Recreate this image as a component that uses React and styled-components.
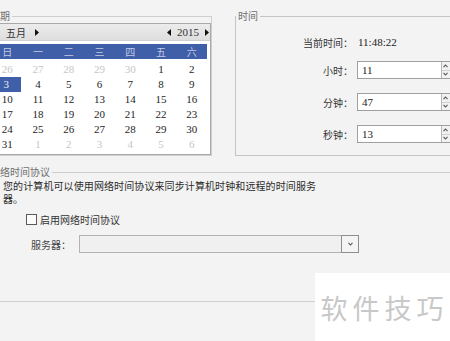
import React from 'react';
import styled, { createGlobalStyle } from 'styled-components';

const GlobalStyle = createGlobalStyle`
    html, body {
        margin: 0;
        padding: 0;
        background: #f3f3f3;
    }
    body {
        font-family: "Noto Sans CJK SC", sans-serif;
        font-size: 10px;
        color: #2a2a2a;
    }
`;

const cjk = `"Noto Sans CJK SC", sans-serif`;
const serif = `"Liberation Serif", "Noto Sans CJK SC", serif`;

const Page = styled.div`
    position: relative;
    width: 450px;
    height: 341px;
    overflow: hidden;
    background: #f3f3f3;
`;

const TopRow = styled.div`
    display: flex;
    align-items: flex-start;
    padding-top: 9px;
`;

const Group = styled.fieldset`
    flex: none;
    margin: 0;
    min-inline-size: 0;
    border: 1px solid ${p => p.$line || '#cfcfcf'};
    box-sizing: border-box;
`;

const Legend = styled.legend`
    padding: 0 2px;
    margin-left: ${p => p.$shift || 0}px;
    font-family: ${cjk};
    font-size: 10px;
    line-height: 14px;
    color: #707070;
`;

const DateGroup = styled(Group)`
    margin-left: -20px;
    width: 232px;
    padding: 0 0 0 10px;
`;

const Calendar = styled.div`
    width: 220px;
    box-sizing: border-box;
    border: 1px solid #a9a9a9;
    background: #fff;
    padding: 0 3px 2px 0;
`;

const CalHead = styled.div`
    display: flex;
    justify-content: space-between;
    align-items: center;
    height: 17px;
    margin-right: -3px;
    padding: 0 1px 0 14px;
    background: linear-gradient(#ececec, #dedede);
    border-bottom: 1px solid #d0d0d0;
    box-sizing: border-box;
`;

const Nav = styled.div`
    display: flex;
    align-items: center;
    gap: ${p => p.$gap || 6}px;
    font-family: ${p => (p.$num ? serif : cjk)};
    font-size: ${p => (p.$num ? 11 : 10)}px;
    color: #333;
`;

const Tri = ({ left }) => (
    <svg width="4" height="7" viewBox="0 0 4 7">
        <polygon points={left ? '4,0 0,3.5 4,7' : '0,0 4,3.5 0,7'} fill="#111" />
    </svg>
);

const WeekBand = styled.div`
    display: grid;
    grid-template-columns: repeat(7, 1fr);
    height: 15px;
    margin-top: 3px;
    background: #3f5fa9;
    margin-bottom: 3px;
`;

const WeekDay = styled.div`
    text-align: center;
    font-family: ${cjk};
    font-size: 10px;
    line-height: 15px;
    color: #c3cbe4;
`;

const DayGrid = styled.div`
    display: grid;
    grid-template-columns: repeat(7, 1fr);
    grid-auto-rows: 15px;
`;

const Day = styled.div`
    text-align: center;
    font-family: ${serif};
    font-size: 11px;
    line-height: 15px;
    margin-right: ${p => (p.$sel ? 2 : 0)}px;
    color: ${p => (p.$sel ? '#e8ecf6' : p.$dim ? '#c6c6c6' : '#1e1e1e')};
    background: ${p => (p.$sel ? '#3f5fa9' : 'transparent')};
`;

const TimeGroup = styled(Group)`
    margin-left: 23px;
    width: 260px;
    padding: 0;
    border-color: #c4c4c4;
`;

const TimeForm = styled.div`
    display: flex;
    flex-direction: column;
    gap: 14px;
    padding: 12px 0 12px;
`;

const FormRow = styled.div`
    display: flex;
    align-items: center;
    gap: 4px;
    height: ${p => (p.$plain ? 14 : 18)}px;
    margin-bottom: ${p => (p.$plain ? -2 : 0)}px;
`;

const Label = styled.div`
    width: 117px;
    text-align: right;
    font-family: ${cjk};
    font-size: 10px;
    color: #333;
`;

const Value = styled.div`
    padding-left: 1px;
    font-family: ${serif};
    font-size: 11px;
    color: #222;
`;

const Spin = styled.div`
    display: flex;
    width: 96px;
    height: 18px;
    box-sizing: border-box;
    border: 1px solid #9f9f9f;
    background: #fff;
`;

const SpinText = styled.div`
    flex: 1;
    padding-left: 4px;
    font-family: ${serif};
    font-size: 11px;
    line-height: 16px;
    color: #222;
`;

const SpinButtons = styled.div`
    display: flex;
    flex-direction: column;
    width: 10px;
    border-left: 1px solid #b8b8b8;
    background: #f2f2f2;
`;

const SpinBtn = styled.div`
    flex: 1;
    display: flex;
    align-items: center;
    justify-content: flex-start;
    padding-left: 1px;
    border-bottom: ${p => (p.$top ? '1px solid #d0d0d0' : 'none')};
`;

const Chevron = ({ up, w = 5 }) => (
    <svg width={w} height="4" viewBox="0 0 5 4">
        <polyline
            points={up ? '0.5,3.2 2.5,1 4.5,3.2' : '0.5,0.8 2.5,3 4.5,0.8'}
            fill="none"
            stroke="#555"
            strokeWidth="1.1"
        />
    </svg>
);

const SpinField = ({ value }) => (
    <Spin>
        <SpinText>{value}</SpinText>
        <SpinButtons>
            <SpinBtn $top><Chevron up /></SpinBtn>
            <SpinBtn><Chevron /></SpinBtn>
        </SpinButtons>
    </Spin>
);

const NtpGroup = styled(Group)`
    margin: 9px 0 0 -20px;
    width: 520px;
    padding: 0 0 48px 22px;
    border-color: #cfcfcf;
`;

const Desc = styled.p`
    margin: 0;
    max-width: 316px;
    font-family: ${cjk};
    font-size: 10px;
    letter-spacing: 0.1px;
    line-height: 13px;
    color: #2c2c2c;
`;

const CheckRow = styled.label`
    display: flex;
    align-items: center;
    gap: 3px;
    height: 14px;
    margin: 7px 0 0 23px;
    font-family: ${cjk};
    font-size: 10px;
    color: #333;
`;

const Box = styled.span`
    width: 11px;
    height: 11px;
    box-sizing: border-box;
    border: 1px solid #5a5a5a;
    background: #fbfbfb;
`;

const ServerRow = styled.div`
    display: flex;
    align-items: center;
    gap: 8px;
    height: 18px;
    margin: 9px 0 0 28px;
`;

const ServerLabel = styled.span`
    width: 40px;
    font-family: ${cjk};
    font-size: 10px;
    color: #444;
`;

const Combo = styled.div`
    display: flex;
    justify-content: flex-end;
    width: 280px;
    height: 18px;
    box-sizing: border-box;
    border: 1px solid #b4b4b4;
    background: #f0f0f0;
`;

const ComboArrow = styled.div`
    display: flex;
    align-items: center;
    justify-content: center;
    width: 16px;
    margin: -1px -1px -1px 0;
    border: 1px solid #8e8e8e;
    background: #f4f4f4;
`;

const Watermark = styled.div`
    position: absolute;
    left: 315px;
    top: 273px;
    width: 135px;
    height: 68px;
    display: flex;
    align-items: center;
    justify-content: center;
    padding-left: 4px;
    box-sizing: border-box;
    background: #fff;
    font-family: ${cjk};
    font-size: 27px;
    letter-spacing: 5px;
    color: #c8c8c8;
`;

const weekDays = ['日', '一', '二', '三', '四', '五', '六'];

const days = [
    ...[26, 27, 28, 29, 30].map(d => ({ d, dim: true })),
    ...Array.from({ length: 31 }, (_, i) => ({ d: i + 1, sel: i + 1 === 3 })),
    ...[1, 2, 3, 4, 5, 6].map(d => ({ d, dim: true })),
];

const App = () => (
    <Page>
        <GlobalStyle />
        <TopRow>
            <DateGroup>
                <Legend $shift={-3}>日期</Legend>
                <Calendar>
                    <CalHead>
                        <Nav $gap={9}>五月 <Tri /></Nav>
                        <Nav $num>
                            <Tri left />2015<Tri />
                        </Nav>
                    </CalHead>
                    <WeekBand>
                        {weekDays.map(w => <WeekDay key={w}>{w}</WeekDay>)}
                    </WeekBand>
                    <DayGrid>
                        {days.map((x, i) => (
                            <Day key={i} $dim={x.dim} $sel={x.sel}>{x.d}</Day>
                        ))}
                    </DayGrid>
                </Calendar>
            </DateGroup>
            <TimeGroup>
                <Legend>时间</Legend>
                <TimeForm>
                    <FormRow $plain>
                        <Label>当前时间：</Label>
                        <Value>11:48:22</Value>
                    </FormRow>
                    <FormRow>
                        <Label>小时：</Label>
                        <SpinField value="11" />
                    </FormRow>
                    <FormRow>
                        <Label>分钟：</Label>
                        <SpinField value="47" />
                    </FormRow>
                    <FormRow>
                        <Label>秒钟：</Label>
                        <SpinField value="13" />
                    </FormRow>
                </TimeForm>
            </TimeGroup>
        </TopRow>
        <NtpGroup>
            <Legend $shift={-15}>网络时间协议</Legend>
            <Desc>您的计算机可以使用网络时间协议来同步计算机时钟和远程的时间服务器。</Desc>
            <CheckRow>
                <Box />
                启用网络时间协议
            </CheckRow>
            <ServerRow>
                <ServerLabel>服务器：</ServerLabel>
                <Combo>
                    <ComboArrow><Chevron /></ComboArrow>
                </Combo>
            </ServerRow>
        </NtpGroup>
        <Watermark>软件技巧</Watermark>
    </Page>
);

export default App;
